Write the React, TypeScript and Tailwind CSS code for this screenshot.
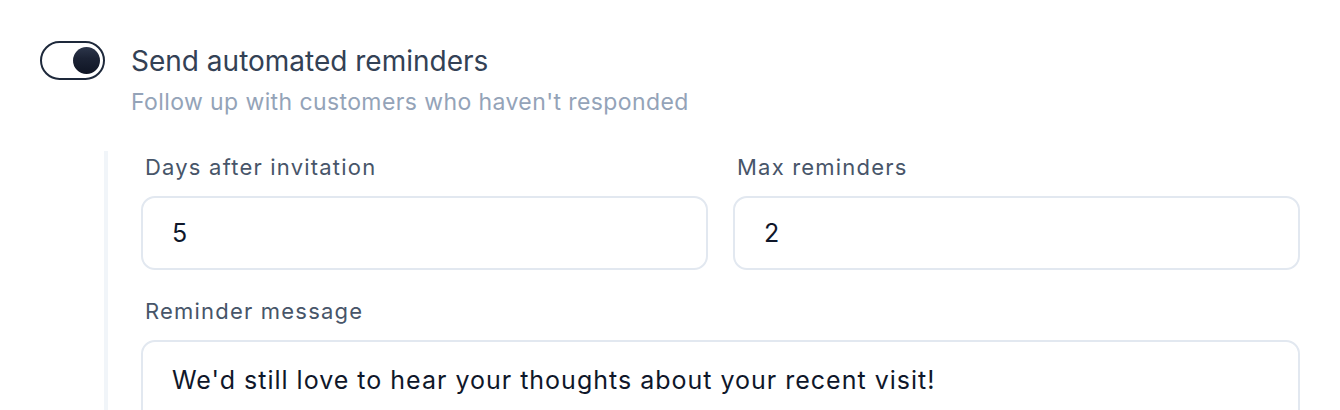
import { useState } from 'react'

function Toggle({ on, onChange }: { on: boolean; onChange: (v: boolean) => void }) {
  return (
    <button
      type="button"
      onClick={() => onChange(!on)}
      className="relative shrink-0 w-[65px] h-[39px] rounded-full border-[2.5px] border-[#1e293b] bg-white"
    >
      <span
        className={
          on
            ? 'absolute top-[3.5px] right-[3.5px] w-[27px] h-[27px] rounded-full bg-[linear-gradient(180deg,#2d364b_0%,#1c2335_42%,#0f1524_100%)]'
            : 'absolute top-[3.5px] left-[3.5px] w-[27px] h-[27px] rounded-full bg-[#cbd5e1]'
        }
      />
    </button>
  )
}

function Field({ label, value }: { label: string; value: string }) {
  return (
    <div className="flex flex-col flex-1">
      <label className="text-[22px] leading-[32px] tracking-[1.2px] text-[#475569] pl-[4px]">{label}</label>
      <input
        defaultValue={value}
        className="mt-[13px] h-[74px] rounded-[14px] border-2 border-[#e2e8f0] bg-white px-[29px] text-[25px] text-[#0f172a] outline-none"
      />
    </div>
  )
}

export default function App() {
  const [on, setOn] = useState(true)

  return (
    <div className="w-[1340px] h-[410px] overflow-hidden bg-white font-['Inter','Noto_Sans',sans-serif] pl-[40px] pt-[41px]">
      {/* toggle row */}
      <div className="flex items-start gap-[26px]">
        <Toggle on={on} onChange={setOn} />
        <div className="flex flex-col pt-[2px]">
          <span className="text-[28px] leading-[36px] text-[#334155]">Send automated reminders</span>
          <span className="mt-[8px] text-[23px] leading-[30px] tracking-[0.4px] text-[#94a3b8]">Follow up with customers who haven't responded</span>
        </div>
      </div>

      {/* reminder settings */}
      <div className="ml-[64px] mt-[34px] border-l-4 border-[#f1f5f9] pl-[33px] pr-[40px] h-[300px]">
        <div className="flex gap-[25px]">
          <Field label="Days after invitation" value="5" />
          <Field label="Max reminders" value="2" />
        </div>
        <div className="flex flex-col mt-[25px]">
          <label className="text-[22px] leading-[32px] tracking-[1.2px] text-[#475569] pl-[4px]">Reminder message</label>
          <textarea
            defaultValue="We'd still love to hear your thoughts about your recent visit!"
            className="mt-[13px] h-[120px] resize-none rounded-[14px] border-2 border-[#e2e8f0] bg-white px-[29px] pt-[21px] text-[25px] leading-[34px] tracking-[1px] text-[#0f172a] outline-none"
          />
        </div>
      </div>
    </div>
  )
}
